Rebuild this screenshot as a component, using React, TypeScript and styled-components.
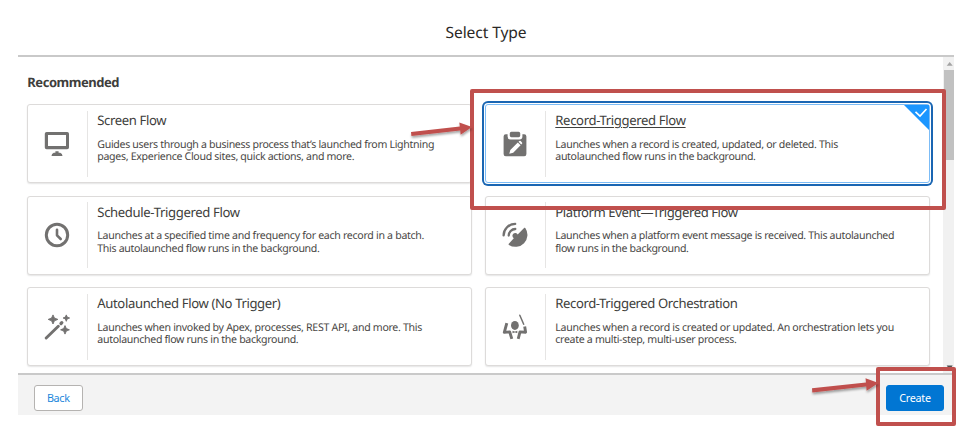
import React from "react";
import styled, { createGlobalStyle, css } from "styled-components";

const GlobalStyle = createGlobalStyle`
  * { box-sizing: border-box; }
  body {
    margin: 0;
    background: #fff;
    color: #3e3e3c;
    font-family: "Segoe UI", "Noto Sans", "Open Sans", sans-serif;
    text-rendering: geometricPrecision;
    overflow: hidden;
  }
`;

const RED = "#c0504d";
const GRAY = "#727170";

const Page = styled.div`
  position: relative;
  width: 961px;
  height: 427px;
  padding: 0 7px 0 18px;
  overflow: hidden;
`;

const Header = styled.header`
  display: flex;
  align-items: center;
  justify-content: center;
  height: 57px;
  padding-top: 9px;
  border-bottom: 2px solid #c9c9c9;
`;

const Title = styled.h1`
  margin: 0;
  font-size: 15.6px;
  font-weight: 400;
  line-height: 22px;
  letter-spacing: -0.1px;
  color: #2b2826;
`;

const Body = styled.main`
  display: flex;
  height: 316px;
  overflow: hidden;
`;

const Content = styled.section`
  flex: 1;
  padding: 16px 12.7px 0 9.3px;
`;

const SectionTitle = styled.h2`
  margin: 0 0 13px;
  font-size: 13px;
  font-weight: 700;
  line-height: 18px;
  letter-spacing: -0.47px;
  color: #3e3e3c;
`;

const CardGrid = styled.div`
  display: grid;
  grid-template-columns: 445px 445px;
  grid-auto-rows: 79px;
  gap: 12.6px 13px;
`;

const Card = styled.article<{ $selected?: boolean }>`
  position: relative;
  display: flex;
  align-items: center;
  border: 1px solid #dddbda;
  border-radius: 3px;
  background: #fff;
  box-shadow: 0 1px 1.5px rgba(0, 0, 0, 0.1);
  ${(p) =>
    p.$selected &&
    css`
      border-color: #7cbcf6;
      box-shadow: 0 0 0 1px #fff, 0 0 0 3px #1a66b3;
    `}
`;

const IconCell = styled.div`
  display: flex;
  align-items: center;
  justify-content: center;
  width: 60px;
  height: 66px;
  padding-right: 1.5px;
  border-right: 1.5px solid #e6e5e4;
  svg {
    display: block;
    width: 26px;
    height: 26px;
    fill: ${GRAY};
  }
`;

const CardText = styled.div`
  align-self: flex-start;
  padding: 5px 0 0 9px;
`;

const CardTitle = styled.h3<{ $underlined?: boolean; $spacing: number }>`
  margin: 0 0 8.5px;
  font-size: 13.1px;
  font-weight: 400;
  line-height: 20px;
  white-space: nowrap;
  letter-spacing: ${(p) => p.$spacing}px;
  text-decoration: ${(p) => (p.$underlined ? "underline" : "none")};
  text-underline-offset: 1.5px;
  text-decoration-thickness: 1px;
`;

const Line = styled.p<{ $spacing: number }>`
  margin: 0;
  width: max-content;
  font-size: 10.6px;
  line-height: 12.6px;
  white-space: nowrap;
  letter-spacing: ${(p) => p.$spacing}px;
  color: #484644;
`;

const Corner = styled.svg`
  position: absolute;
  top: 0;
  right: 0;
  width: 25px;
  height: 25px;
`;

const Scrollbar = styled.div`
  display: flex;
  flex-direction: column;
  width: 11px;
  height: 316px;
  background: #f1f1f1;
  svg { display: block; width: 11px; height: 13px; }
`;

const Thumb = styled.div`
  height: 90px;
  margin-left: 1px;
  margin-bottom: auto;
  background: #c1c1c1;
`;

const Footer = styled.footer`
  display: flex;
  align-items: flex-start;
  justify-content: space-between;
  height: 42px;
  padding: 10px 10px 0 15.5px;
  border-top: 2px solid #c9c9c9;
  background: #f3f3f3;
`;

const Button = styled.button<{ $primary?: boolean }>`
  width: ${(p) => (p.$primary ? 58 : 49.5)}px;
  height: 26px;
  padding: 0;
  border: 1px solid ${(p) => (p.$primary ? "#0176d3" : "#b5b3b1")};
  border-radius: 3px;
  background: ${(p) => (p.$primary ? "#0176d3" : "#fff")};
  color: ${(p) => (p.$primary ? "#fff" : "#1b87db")};
  font-family: inherit;
  font-size: 10.8px;
  line-height: 22px;
  letter-spacing: ${(p) => (p.$primary ? -0.3 : -0.35)}px;
`;

const Annotations = styled.svg`
  position: absolute;
  inset: 0;
  width: 961px;
  height: 427px;
  pointer-events: none;
`;

const ScreenIcon = () => (
  <svg viewBox="0 0 26 26">
    <path fillRule="evenodd" d="M2.6 1h20.6q1.8 0 1.8 1.8v13.6q0 1.8-1.8 1.8H2.6q-1.8 0-1.8-1.8V2.8Q.8 1 2.6 1zM4 4.1v11h18v-11z" />
    <path d="M11.4 20.3h3.2v1.5h1.6q2.3.7 2.3 3.3H7.5q0-2.6 2.3-3.3h1.6z" />
  </svg>
);

const ClockIcon = () => (
  <svg viewBox="0 0 26 26">
    <circle cx="13" cy="13" r="10.7" fill="none" stroke={GRAY} strokeWidth="3" />
    <path d="M13 7.7v5.6l3.7 3.7" fill="none" stroke={GRAY} strokeWidth="2.6" strokeLinecap="round" strokeLinejoin="round" />
  </svg>
);

const WandIcon = () => (
  <svg viewBox="0 0 26 26">
    <path d="M2.2 24 14.3 12.2" stroke={GRAY} strokeWidth="2.9" strokeLinecap="round" />
    <path d="M17 9.5l.8-.8" stroke={GRAY} strokeWidth="3.3" strokeLinecap="round" />
    <g stroke={GRAY} strokeWidth="0.9" strokeLinejoin="round">
      <path d="M9 .9l1.4 3.1 3.5 1.4-3.5 1.4L9 10 7.6 6.8 4.2 5.4 7.6 4z" />
      <path d="M22.3.9l.9 2.2 2.4.9-2.4.9-.9 2.4-1-2.4-2.2-.9 2.2-.9z" />
      <path d="M21 11.6l1.3 2.9 3.1 1.3-3.1 1.3-1.3 3-1.3-3-3.1-1.3 3.1-1.3z" />
    </g>
  </svg>
);

const ClipboardIcon = () => (
  <svg viewBox="0 0 26 26">
    <path d="M9.4.8h7.2q1.6 0 1.6 1.6v2.2q0 1.7-1.6 1.7H9.400q-1.600 0-1.600-1.700V2.400Q7.800.8 9.400.8z" />
    <path d="M3.800 3.300h1.800v2.100q0 3 3 3h8.800q3 0 3-3V3.300h1.800q2.200 0 2.200 2.200v17.600q0 2.200-2.200 2.200H3.800q-2.200 0-2.200-2.200V5.500q0-2.200 2.200-2.200z" />
    <path d="M7.300 22.800l1-3.900 7.500-7.400 2.800 2.800-7.400 7.500zM16.500 10.800l.9-.8q.7-.5 1.300.1l1.300 1.300q.6.700 0 1.300l-.8.9z" fill="#fff" />
  </svg>
);

const DishIcon = () => (
  <svg viewBox="0 0 26 26">
    <path d="M1.600 13.400A11.600 11.600 0 0 1 13.200 1.900M6.700 13.600A6.700 6.700 0 0 1 13.300 7" fill="none" stroke={GRAY} strokeWidth="2.300" strokeLinecap="round" />
    <path d="M22.300 5.800q.6-.4 1 .2A12 12 0 0 1 6.900 22.900q-.7-.5-.1-1.100l5-5.600a2.800 2.800 0 1 1 3.900-3.700z" />
  </svg>
);

const ConductorIcon = () => (
  <svg viewBox="0 0 26 26">
    <ellipse cx="12.900" cy="11.400" rx="3.900" ry="4.500" />
    <path d="M17.800 1.300l3.900 9" fill="none" stroke={GRAY} strokeWidth="1.500" strokeLinecap="round" />
    <path d="M4.800 9.200l-2.500 9.200 5.400-.5 2.100 6.900M22.700 12.500l.9 5.700-5.600-.3-1.800 6.900" fill="none" stroke={GRAY} strokeWidth="2.900" strokeLinejoin="round" />
    <path d="M10.500 16.800l2 .8h.8l2-.8v2.500l-2-.8h-.8l-2 .8z" />
  </svg>
);

interface Flow {
  title: string;
  titleSpacing: number;
  lines: [string, number][];
  icon: React.ReactNode;
  selected?: boolean;
}

const flows: Flow[] = [
  {
    title: "Screen Flow",
    titleSpacing: -0.37,
    lines: [
      ["Guides users through a business process that’s launched from Lightning", -0.32],
      ["pages, Experience Cloud sites, quick actions, and more.", -0.32],
    ],
    icon: <ScreenIcon />,
  },
  {
    title: "Record-Triggered Flow",
    titleSpacing: -0.35,
    lines: [
      ["Launches when a record is created, updated, or deleted. This", -0.32],
      ["autolaunched flow runs in the background.", -0.34],
    ],
    icon: <ClipboardIcon />,
    selected: true,
  },
  {
    title: "Schedule-Triggered Flow",
    titleSpacing: -0.35,
    lines: [
      ["Launches at a specified time and frequency for each record in a batch.", -0.3],
      ["This autolaunched flow runs in the background.", -0.325],
    ],
    icon: <ClockIcon />,
  },
  {
    title: "Platform Event—Triggered Flow",
    titleSpacing: -0.42,
    lines: [
      ["Launches when a platform event message is received. This autolaunched", -0.335],
      ["flow runs in the background.", -0.34],
    ],
    icon: <DishIcon />,
  },
  {
    title: "Autolaunched Flow (No Trigger)",
    titleSpacing: -0.37,
    lines: [
      ["Launches when invoked by Apex, processes, REST API, and more. This", -0.31],
      ["autolaunched flow runs in the background.", -0.32],
    ],
    icon: <WandIcon />,
  },
  {
    title: "Record-Triggered Orchestration",
    titleSpacing: -0.4,
    lines: [
      ["Launches when a record is created or updated. An orchestration lets you", -0.3],
      ["create a multi-step, multi-user process.", -0.31],
    ],
    icon: <ConductorIcon />,
  },
];

export default function App() {
  return (
    <>
      <GlobalStyle />
      <Page>
        <Header>
          <Title>Select Type</Title>
        </Header>
        <Body>
          <Content>
            <SectionTitle>Recommended</SectionTitle>
            <CardGrid>
              {flows.map((flow) => (
                <Card key={flow.title} $selected={flow.selected}>
                  <IconCell>{flow.icon}</IconCell>
                  <CardText>
                    <CardTitle $underlined={flow.selected} $spacing={flow.titleSpacing}>
                      {flow.title}
                    </CardTitle>
                    {flow.lines.map(([text, spacing]) => (
                      <Line key={text} $spacing={spacing}>
                        {text}
                      </Line>
                    ))}
                  </CardText>
                  {flow.selected && (
                    <Corner viewBox="0 0 25 25">
                      <path d="M0 0h25v25z" fill="#1b96ff" />
                      <path d="M11.500 6.800l4.500 4.200 6.500-7" fill="none" stroke="#fff" strokeWidth="1.600" />
                    </Corner>
                  )}
                </Card>
              ))}
            </CardGrid>
          </Content>
          <Scrollbar>
            <svg viewBox="0 0 11 13">
              <path d="M3.700 8.700h6L6.700 5z" fill="#a3a3a3" />
            </svg>
            <Thumb />
            <svg viewBox="0 0 11 13">
              <path d="M3.700 5.500h6L6.700 10z" fill="#505050" />
            </svg>
          </Scrollbar>
        </Body>
        <Footer>
          <Button>Back</Button>
          <Button $primary>Create</Button>
        </Footer>
        <Annotations viewBox="0 0 961 427">
          <defs>
            <filter id="shadow" x="-20%" y="-60%" width="140%" height="260%">
              <feDropShadow dx="0.500" dy="2" stdDeviation="1.300" floodColor="#000" floodOpacity="0.350" />
            </filter>
          </defs>
          <g fill="none" stroke={RED} strokeWidth="4" strokeLinejoin="round">
            <rect x="472" y="91" width="472" height="117" />
            <rect x="878" y="369" width="76" height="55" />
          </g>
          <g fill={RED} filter="url(#shadow)">
            <path d="M411 132l48.800-5.500-.5-4L472 127l-11.400 7.700-.4-4.200L411.400 136z" />
            <path d="M812 388.300l54-5.800-.5-4.200L878.500 383l-11.900 7.700-.4-4.200-53.900 6z" />
          </g>
        </Annotations>
      </Page>
    </>
  );
}
